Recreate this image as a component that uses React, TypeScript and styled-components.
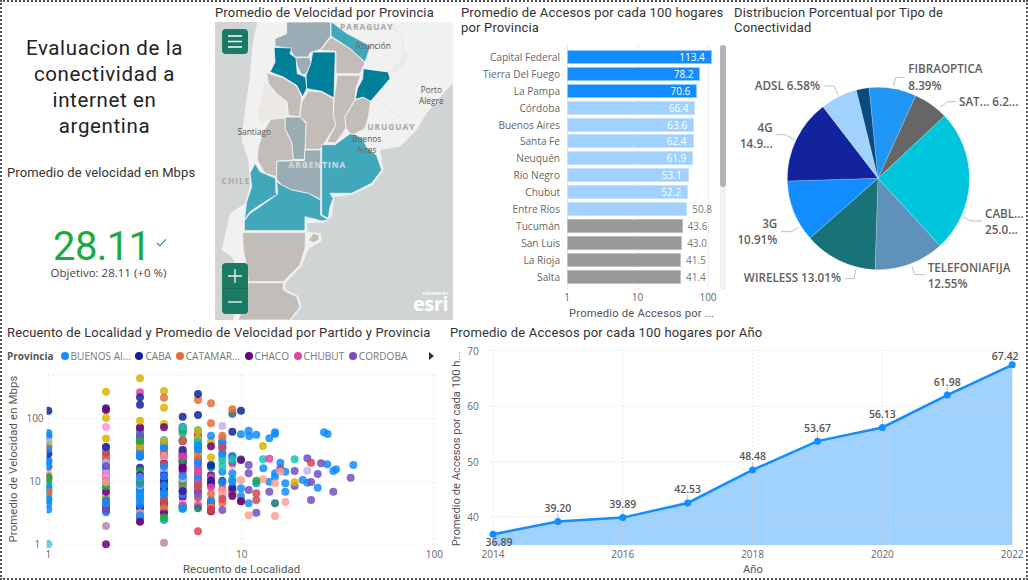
import React from 'react';
import styled, { createGlobalStyle } from 'styled-components';

const GlobalStyle = createGlobalStyle`
  html, body { margin: 0; padding: 0; background: #fff; }
  * { box-sizing: border-box; }
`;

const TITLE_FONT = `Roboto, "Liberation Sans", sans-serif`;
const DATA_FONT = `"Open Sans", "Liberation Sans", sans-serif`;

// Main page
const App = () => (
  <Page>
    <GlobalStyle />
    <TopRow>
      <KpiColumn />
      <MapPanel />
      <BarsPanel />
      <PiePanel />
    </TopRow>
    <BottomRow>
      <ScatterPanel />
      <LinePanel />
    </BottomRow>
  </Page>
);

export default App;

const Page = styled.div`
  width: 1028px;
  height: 580px;
  border: 2px dotted #555;
  display: flex;
  flex-direction: column;
  overflow: hidden;
  background: #fff;
`;

const TopRow = styled.div`
  height: 318px;
  display: flex;
  flex: none;
`;

const BottomRow = styled.div`
  flex: 1;
  display: flex;
  min-height: 0;
`;

const Title = styled.div`
  font-family: ${TITLE_FONT};
  font-size: 13px;
  line-height: 15px;
  letter-spacing: 0.17px;
  color: #333;
`;

// KPI column
const KpiColumn = () => (
  <KpiWrap>
    <Heading>Evaluacion de la conectividad a internet en argentina</Heading>
    <KpiLabel>Promedio de velocidad en Mbps</KpiLabel>
    <KpiValue>
      28.11
      <CheckMark viewBox="0 0 12 10">
        <path d="M1 5.5 L4.2 8.5 L11 1.5" fill="none" stroke="#1aab40" strokeWidth="1.4" />
      </CheckMark>
    </KpiValue>
    <KpiGoal>Objetivo: 28.11 (+0 %)</KpiGoal>
  </KpiWrap>
);

const KpiWrap = styled.div`
  width: 213px;
  flex: none;
  display: flex;
  flex-direction: column;
  padding-top: 34px;
`;

const Heading = styled.h1`
  margin: 0 0 0 17.5px;
  width: 170px;
  font-family: ${TITLE_FONT};
  font-weight: 400;
  font-size: 20.5px;
  line-height: 25.9px;
  letter-spacing: 0.62px;
  text-align: center;
  color: #222;
`;

const KpiLabel = styled.div`
  margin: 25px 0 0 5px;
  font-family: ${TITLE_FONT};
  font-size: 13px;
  line-height: 16px;
  letter-spacing: 0.1px;
  color: #333;
  white-space: nowrap;
`;

const KpiValue = styled.div`
  position: relative;
  align-self: flex-start;
  margin: 48px 0 0 51px;
  font-family: ${TITLE_FONT};
  font-size: 40px;
  line-height: 36px;
  letter-spacing: -0.6px;
  color: #1aab40;
`;

const CheckMark = styled.svg`
  position: absolute;
  left: 100%;
  top: 9px;
  margin-left: 6px;
  width: 11px;
  height: 9px;
`;

const KpiGoal = styled.div`
  margin-top: 0;
  font-family: ${DATA_FONT};
  font-size: 11.5px;
  line-height: 16px;
  text-align: center;
  color: #444;
`;

// Map panel
const SLATE = '#9aacb4';
const STONE = '#c2bdb9';
const TEAL = '#41a7bb';
const DEEP = '#007f9b';
const PALE = '#ece9e5';

const provinces: { fill: string; pts: string }[] = [
  { fill: SLATE, pts: '860,66 992,66 992,108 962,148 930,158 925,171 885,171 868,146 825,138 825,116 860,101' },
  { fill: SLATE, pts: '885,174 928,172 934,190 918,222 905,224 895,206' },
  { fill: TEAL, pts: '993,66 1000,70 1040,100 1112,138 1095,186 1050,146 993,108' },
  { fill: STONE, pts: '993,111 1050,146 1095,188 1080,221 1008,221 1008,154 962,151' },
  { fill: DEEP, pts: '822,142 875,144 870,161 888,174 892,221 905,226 918,232 920,266 908,291 890,256 850,231 810,216 825,186' },
  { fill: DEEP, pts: '938,156 1006,156 1002,294 965,274 920,266 918,226 932,191' },
  { fill: DEEP, pts: '1090,206 1165,216 1170,236 1140,271 1112,304 1088,292 1066,298 1072,266 1088,236' },
  { fill: PALE, pts: '1212,151 1225,161 1215,194 1170,231 1170,214 1195,186' },
  { fill: STONE, pts: '800,218 850,234 890,258 905,291 898,351 865,346 862,306 830,281 805,251' },
  { fill: PALE, pts: '790,238 805,254 830,282 860,306 862,346 845,358 810,358 785,371 770,334 785,298' },
  { fill: STONE, pts: '925,274 965,276 1000,296 1000,346 1008,374 975,426 960,448 915,448 918,366 900,351 905,306' },
  { fill: STONE, pts: '1012,226 1082,226 1068,264 1065,298 1035,351 1038,384 1008,428 980,428 1008,374 1000,346 1002,296' },
  { fill: STONE, pts: '1065,301 1090,292 1112,304 1105,351 1095,386 1055,406 1038,384 1035,351' },
  { fill: SLATE, pts: '855,351 900,351 918,371 915,448 913,478 880,478 875,426 855,386' },
  { fill: STONE, pts: '812,358 855,354 855,386 875,428 880,480 830,484 830,530 795,520 772,480 775,440 790,395' },
  { fill: SLATE, pts: '830,484 880,482 913,482 915,450 962,450 962,598 925,580 875,570 845,555 830,538' },
  { fill: TEAL, pts: '965,434 1005,434 1050,401 1085,411 1100,441 1130,466 1145,510 1115,550 1055,580 990,580 1000,595 990,620 985,655 965,645 965,600' },
  { fill: TEAL, pts: '765,490 780,515 827,535 828,578 832,583 780,615 750,635 733,660 740,605 755,560 750,520' },
  { fill: TEAL, pts: '830,545 845,555 875,570 925,580 962,600 962,645 985,660 965,663 915,650 915,692 733,692 733,662 750,640 780,620 833,582' },
  { fill: STONE, pts: '727,697 917,697 915,745 900,795 850,845 745,845 740,800 730,750' },
  { fill: STONE, pts: '925,720 940,700 957,705 957,720 940,728' },
  { fill: STONE, pts: '745,848 850,848 850,870 890,890 900,920 870,960 715,960 735,900' },
];

const mapLabels: { x: number; y: number; t: string; tone: 'city' | 'country' | 'inner' }[] = [
  { x: 1100, y: 90, t: 'PARAGUAY', tone: 'country' },
  { x: 1119, y: 148, t: 'Asunción', tone: 'city' },
  { x: 1294, y: 279, t: 'Porto', tone: 'city' },
  { x: 1294, y: 311, t: 'Alegre', tone: 'city' },
  { x: 1174, y: 390, t: 'URUGUAY', tone: 'country' },
  { x: 763, y: 404, t: 'Santiago', tone: 'city' },
  { x: 1100, y: 427, t: 'Buenos', tone: 'city' },
  { x: 1100, y: 458, t: 'Aires', tone: 'city' },
  { x: 952, y: 504, t: 'ARGENTINA', tone: 'inner' },
  { x: 708, y: 553, t: 'CHILE', tone: 'country' },
];

const labelColors = { city: '#505050', country: '#a6a6a6', inner: '#cdd6d9' };

const MapPanel = () => (
  <MapWrap>
    <MapTitle>Promedio de Velocidad por Provincia</MapTitle>
    <MapCanvas>
      <MapSvg viewBox="645 66 714 894">
        <rect x="645" y="66" width="714" height="894" fill="#f1f1f1" />
        <polygon
          points="645,66 772,66 758,130 748,240 735,330 725,420 745,480 750,560 735,610 690,640 680,685 665,750 695,770 715,810 700,960 645,960"
          fill="#d2d5d5"
        />
        <polygon
          points="1359,250 1330,280 1280,340 1250,390 1200,440 1140,450 1150,510 1118,555 1055,585 1003,590 995,650 970,668 920,670 922,695 962,700 965,722 925,748 905,798 856,848 856,868 895,888 905,920 875,960 1359,960"
          fill="#d0d4d5"
        />
        <polyline points="1120,290 1175,330 1235,385" fill="none" stroke="#dcdcdc" strokeWidth="2" />
        <polyline points="1170,80 1205,100 1210,152" fill="none" stroke="#dcdcdc" strokeWidth="2" />
        {provinces.map((p, i) => (
          <polygon key={i} points={p.pts} fill={p.fill} stroke="#f2f3f3" strokeWidth="2.5" strokeLinejoin="round" />
        ))}
        {mapLabels.map(l => (
          <MapLabel key={l.t} x={l.x} y={l.y} $tone={l.tone}>
            {l.t}
          </MapLabel>
        ))}
      </MapSvg>
      <MenuButton>
        <svg width="14" height="13" viewBox="0 0 14 13">
          <path d="M0 1 H14 M0 6.5 H14 M0 12 H14" stroke="#fff" strokeWidth="1.3" />
        </svg>
      </MenuButton>
      <ZoomGroup>
        <ZoomButton>
          <svg width="14" height="14" viewBox="0 0 14 14">
            <path d="M7 0 V14 M0 7 H14" stroke="#f4f0d8" strokeWidth="1.4" />
          </svg>
        </ZoomButton>
        <ZoomButton>
          <svg width="14" height="14" viewBox="0 0 14 14">
            <path d="M0 7 H14" stroke="#dfe8e4" strokeWidth="1.4" />
          </svg>
        </ZoomButton>
      </ZoomGroup>
      <EsriMark>
        <EsriSmall>POWERED BY</EsriSmall>
        <EsriWord>esri</EsriWord>
      </EsriMark>
    </MapCanvas>
  </MapWrap>
);

const MapWrap = styled.div`
  width: 239px;
  flex: none;
  display: flex;
  flex-direction: column;
  padding-top: 3px;
`;

const MapTitle = styled(Title)`
  height: 17px;
  white-space: nowrap;
`;

const MapCanvas = styled.div`
  position: relative;
  width: 238px;
  height: 298px;
  overflow: hidden;
`;

const MapSvg = styled.svg`
  display: block;
  width: 238px;
  height: 298px;
`;

const MapLabel = styled.text<{ $tone: 'city' | 'country' | 'inner' }>`
  font-family: ${DATA_FONT};
  font-size: 25px;
  font-weight: ${p => (p.$tone === 'city' ? 400 : 700)};
  letter-spacing: ${p => (p.$tone === 'city' ? '0' : '3px')};
  text-anchor: middle;
  fill: ${p => labelColors[p.$tone]};
  stroke: rgba(255, 255, 255, 0.3);
  stroke-width: 1.5px;
  paint-order: stroke;
`;

const MenuButton = styled.div`
  position: absolute;
  left: 7px;
  top: 7px;
  width: 26px;
  height: 25px;
  border-radius: 4px;
  background: #1a7a63;
  display: flex;
  align-items: center;
  justify-content: center;
`;

const ZoomGroup = styled.div`
  position: absolute;
  left: 7px;
  top: 241px;
  width: 26px;
  height: 51px;
  border-radius: 4px;
  background: #1a7a63;
  display: flex;
  flex-direction: column;
  overflow: hidden;
`;

const ZoomButton = styled.div`
  flex: 1;
  display: flex;
  align-items: center;
  justify-content: center;
  & + & {
    border-top: 1px solid #176a56;
  }
`;

const EsriMark = styled.div`
  position: absolute;
  right: 5px;
  bottom: 7px;
  display: flex;
  flex-direction: column;
  align-items: flex-end;
  color: #fff;
  font-family: ${DATA_FONT};
`;

const EsriSmall = styled.div`
  font-size: 4px;
  line-height: 5px;
  font-weight: 700;
`;

const EsriWord = styled.div`
  font-size: 20px;
  line-height: 15px;
  font-weight: 700;
  letter-spacing: -0.5px;
  padding-bottom: 2px;
`;

// Bar chart panel
const barData: { name: string; value: number; tone: 'blue' | 'light' | 'gray'; outside?: boolean }[] = [
  { name: 'Capital Federal', value: 113.4, tone: 'blue' },
  { name: 'Tierra Del Fuego', value: 78.2, tone: 'blue' },
  { name: 'La Pampa', value: 70.6, tone: 'blue' },
  { name: 'Córdoba', value: 66.4, tone: 'light' },
  { name: 'Buenos Aires', value: 63.6, tone: 'light' },
  { name: 'Santa Fe', value: 62.4, tone: 'light' },
  { name: 'Neuquén', value: 61.9, tone: 'light' },
  { name: 'Río Negro', value: 53.1, tone: 'light' },
  { name: 'Chubut', value: 52.2, tone: 'light' },
  { name: 'Entre Ríos', value: 50.8, tone: 'light', outside: true },
  { name: 'Tucumán', value: 43.6, tone: 'gray', outside: true },
  { name: 'San Luis', value: 43.0, tone: 'gray', outside: true },
  { name: 'La Rioja', value: 41.5, tone: 'gray', outside: true },
  { name: 'Salta', value: 41.4, tone: 'gray', outside: true },
];

const barTones = {
  blue: { fill: '#118dff', edge: '#8cc8ff' },
  light: { fill: '#a0d1ff', edge: '#c4e2ff' },
  gray: { fill: '#999999', edge: '#c0c0c0' },
};

const BarsPanel = () => (
  <BarsWrap>
    <BarsTitle>
      Promedio de Accesos por cada 100 hogares
      <br />
      por Provincia
    </BarsTitle>
    <BarsArea>
      <GridLine $left={106} />
      <GridLine $left={176.5} />
      <GridLine $left={247} />
      <ScrollTrack>
        <ScrollThumb />
      </ScrollTrack>
      {barData.map(b => (
        <BarRow key={b.name}>
          <BarLabel>{b.name}</BarLabel>
          <Bar $tone={b.tone} style={{ width: (Math.log10(b.value) / 2) * 141 }}>
            {!b.outside && <BarValue>{b.value.toFixed(1)}</BarValue>}
            {b.outside && <BarValueOut>{b.value.toFixed(1)}</BarValueOut>}
          </Bar>
        </BarRow>
      ))}
    </BarsArea>
    <BarAxis>
      <BarTick>1</BarTick>
      <BarTick>10</BarTick>
      <BarTick>100</BarTick>
    </BarAxis>
    <BarAxisTitle>Promedio de Accesos por ...</BarAxisTitle>
  </BarsWrap>
);

const BarsWrap = styled.div`
  width: 267px;
  flex: none;
  margin-left: 7px;
  padding-top: 3px;
`;

const BarsTitle = styled(Title)`
  white-space: nowrap;
`;

const BarsArea = styled.div`
  position: relative;
  margin-top: 13.5px;
  height: 236.6px;
`;

const GridLine = styled.div<{ $left: number }>`
  position: absolute;
  left: ${p => p.$left}px;
  top: -4px;
  bottom: -4px;
  border-left: 1px dotted #ddd;
`;

const ScrollTrack = styled.div`
  position: absolute;
  left: 259px;
  top: -4px;
  bottom: -5px;
  width: 6px;
  border-radius: 3px;
  background: #f1f1f1;
`;

const ScrollThumb = styled.div`
  width: 100%;
  height: 142px;
  border-radius: 3px;
  background: #b3b3b3;
`;

const BarRow = styled.div`
  position: relative;
  height: 16.9px;
  display: flex;
  align-items: center;
`;

const BarLabel = styled.div`
  width: 99px;
  flex: none;
  margin-right: 7px;
  font-family: ${DATA_FONT};
  font-size: 10.1px;
  text-align: right;
  color: #666;
  white-space: nowrap;
`;

const Bar = styled.div<{ $tone: 'blue' | 'light' | 'gray' }>`
  position: relative;
  height: 14px;
  background: ${p => barTones[p.$tone].fill};
  border: 1px solid ${p => barTones[p.$tone].edge};
`;

const BarValue = styled.span`
  position: absolute;
  right: 6px;
  top: 0;
  font-family: ${DATA_FONT};
  font-size: 10px;
  line-height: 12px;
  font-weight: 500;
  color: #fff;
`;

const BarValueOut = styled.span`
  position: absolute;
  left: 100%;
  margin-left: 6px;
  top: 0;
  font-family: ${DATA_FONT};
  font-size: 10px;
  line-height: 12px;
  color: #777;
`;

const BarAxis = styled.div`
  margin: 6px 0 0 91px;
  width: 171px;
  height: 13px;
  display: flex;
  justify-content: space-between;
  font-family: ${DATA_FONT};
  font-size: 10px;
  line-height: 13px;
  color: #666;
`;

const BarTick = styled.span`
  width: 30px;
  text-align: center;
`;

const BarAxisTitle = styled.div`
  margin: 3px 0 0 108px;
  font-family: ${TITLE_FONT};
  font-size: 11.2px;
  line-height: 14px;
  letter-spacing: 0.2px;
  color: #555;
  white-space: nowrap;
`;

// Pie panel
const slices: { a: [number, number]; b: [number, number]; fill: string }[] = [
  { a: [423, 263], b: [563, 287], fill: '#1f96f3' },
  { a: [563, 287], b: [650, 348], fill: '#666666' },
  { a: [650, 348], b: [636, 737], fill: '#00c6dd' },
  { a: [636, 737], b: [441, 809], fill: '#5f92ba' },
  { a: [441, 809], b: [246, 714], fill: '#197278' },
  { a: [246, 714], b: [178, 543], fill: '#118dff' },
  { a: [178, 543], b: [285, 320], fill: '#12239e' },
  { a: [285, 320], b: [385, 270], fill: '#a0d1ff' },
  { a: [385, 270], b: [423, 263], fill: '#0a4a80' },
];

const pieLabels: { x: number; y: number; t: string; end?: boolean }[] = [
  { x: 541, y: 220, t: 'FIBRAOPTICA' },
  { x: 541, y: 269, t: '8.39%' },
  { x: 693, y: 318, t: 'SAT... 6.2...' },
  { x: 771, y: 653, t: 'CABL...' },
  { x: 771, y: 702, t: '25.0...' },
  { x: 599, y: 815, t: 'TELEFONIAFIJA' },
  { x: 599, y: 863, t: '12.55%' },
  { x: 339, y: 847, t: 'WIRELESS 13.01%', end: true },
  { x: 148, y: 685, t: '3G', end: true },
  { x: 148, y: 733, t: '10.91%', end: true },
  { x: 134, y: 395, t: '4G', end: true },
  { x: 134, y: 444, t: '14.9...', end: true },
  { x: 276, y: 271, t: 'ADSL 6.58%', end: true },
];

const pieLeaders = [
  'M496 258 L503 232 H530',
  'M636 322 L660 305 H684',
  'M706 652 L730 663 H762',
  'M552 800 L560 824 H590',
  'M384 808 L378 836 H350',
  'M212 682 L190 695 H160',
  'M200 420 L172 404 H145',
  'M330 285 L318 258 H288',
];

const PiePanel = () => (
  <PieWrap>
    <Title>
      Distribucion Porcentual por Tipo de
      <br />
      Conectividad
    </Title>
    <PieSvg viewBox="18 105 876 855">
      {slices.map((s, i) => (
        <path
          key={i}
          d={`M450 535 L${s.a[0]} ${s.a[1]} A274 274 0 0 1 ${s.b[0]} ${s.b[1]} Z`}
          fill={s.fill}
          stroke="#fff"
          strokeWidth="0.6"
        />
      ))}
      {pieLeaders.map(d => (
        <path key={d} d={d} fill="none" stroke="#bdbdbd" strokeWidth="3" />
      ))}
      {pieLabels.map(l => (
        <PieLabel key={l.t} x={l.x} y={l.y} $end={l.end}>
          {l.t}
        </PieLabel>
      ))}
    </PieSvg>
  </PieWrap>
);

const PieWrap = styled.div`
  flex: 1;
  margin-left: 6px;
  padding-top: 3px;
  min-width: 0;
`;

const PieSvg = styled.svg`
  display: block;
  width: 292px;
  height: 285px;
`;

const PieLabel = styled.text<{ $end?: boolean }>`
  font-family: ${DATA_FONT};
  font-size: 35px;
  font-weight: 600;
  fill: #605e5c;
  text-anchor: ${p => (p.$end ? 'end' : 'start')};
`;

// Scatter panel
const pal = {
  blue: '#118dff',
  navy: '#12239e',
  orange: '#e66c37',
  violet: '#6b007b',
  pink: '#e044a7',
  purple: '#744ec2',
  yellow: '#d9b300',
  red: '#d64550',
  teal: '#197278',
  green: '#1aab40',
  mint: '#15c6ad',
  sky: '#4ac6e0',
  lav: '#b887ad',
  lilac: '#bfb2f5',
  salmon: '#ff9f8f',
  rose: '#ff8fdc',
};

const legendItems = [
  { name: 'BUENOS AI...', color: pal.blue },
  { name: 'CABA', color: pal.navy },
  { name: 'CATAMAR...', color: pal.orange },
  { name: 'CHACO', color: pal.violet },
  { name: 'CHUBUT', color: pal.pink },
  { name: 'CORDOBA', color: pal.purple },
];

const columns: [number, number, number, number][] = [
  [145, 330, 570, 34],
  [318, 355, 590, 48],
  [420, 320, 605, 70],
  [492, 360, 600, 66],
  [548, 320, 585, 64],
  [594, 330, 570, 56],
  [633, 345, 585, 26],
  [667, 345, 570, 20],
  [697, 405, 545, 10],
];

const columnColors = [
  pal.blue, pal.blue, pal.violet, pal.orange, pal.purple, pal.blue, pal.pink, pal.yellow,
  pal.green, pal.blue, pal.red, pal.lilac, pal.mint, pal.blue, pal.navy, pal.salmon, pal.rose,
];

// fixed sequence so that the cloud is the same on every run
const makeColumnDots = () => {
  const dots: { x: number; y: number; c: string }[] = [];
  let seed = 7;
  const next = () => {
    seed = (seed * 1103515245 + 12345) % 2147483648;
    return seed / 2147483648;
  };
  columns.forEach(([x, top, bottom, count]) => {
    for (let i = 0; i < count; i++) {
      dots.push({
        x,
        y: top + next() * (bottom - top),
        c: columnColors[Math.floor(next() * columnColors.length)],
      });
    }
  });
  return dots;
};

const groupDots = (c: string, list: number[]) => {
  const out: { x: number; y: number; c: string }[] = [];
  for (let i = 0; i < list.length; i += 2) out.push({ x: list[i], y: list[i + 1], c });
  return out;
};

const sparseDots = [
  ...groupDots(pal.blue, [746, 332, 748, 348, 769, 344, 723, 343, 808, 355, 825, 337, 825, 342, 972, 337, 983, 342, 1060, 435, 1008, 448, 1000, 453, 982, 433, 908, 480, 922, 488, 953, 503, 856, 515, 856, 455, 825, 460, 825, 470, 808, 485, 790, 445, 746, 550, 723, 505, 723, 528, 697, 460, 697, 485, 697, 410, 769, 490, 841, 428, 856, 490, 633, 347, 667, 368]),
  ...groupDots(pal.purple, [1052, 473, 1000, 515, 953, 462, 963, 430, 922, 415, 884, 453, 884, 498, 808, 515, 933, 540, 933, 486, 746, 460, 746, 435, 746, 510, 769, 578, 667, 570, 841, 445]),
  ...groupDots(pal.mint, [884, 418, 789, 418, 723, 418, 697, 418, 667, 422]),
  ...groupDots(pal.salmon, [723, 480, 825, 490, 856, 546, 746, 586, 825, 588, 789, 478, 841, 455, 667, 512]),
  ...groupDots(pal.red, [933, 428, 769, 520, 769, 540, 723, 544, 594, 634, 667, 382, 667, 537]),
  ...groupDots(pal.yellow, [789, 378, 884, 487, 492, 213, 492, 263, 420, 175, 318, 215, 318, 294, 420, 302, 492, 312, 633, 412]),
  ...groupDots(pal.pink, [808, 416, 420, 217]),
  ...groupDots(pal.teal, [825, 550, 697, 281, 594, 565]),
  ...groupDots(pal.green, [769, 482]),
  ...groupDots(pal.orange, [697, 268, 633, 250, 594, 240, 492, 233, 633, 310, 667, 347]),
  ...groupDots(pal.navy, [723, 272, 594, 222, 420, 232, 318, 265, 145, 272, 548, 290, 594, 285, 697, 335, 420, 254]),
  ...groupDots(pal.violet, [318, 270, 492, 322, 723, 420, 318, 673, 420, 605, 697, 528, 723, 544]),
  ...groupDots(pal.rose, [318, 321]),
  ...groupDots(pal.lilac, [667, 318, 922, 452]),
  ...groupDots(pal.lav, [318, 618, 492, 668]),
  ...groupDots(pal.sky, [145, 672]),
];

const scatterDots = [...makeColumnDots(), ...sparseDots];

const ScatterPanel = () => (
  <ScatterWrap>
    <ScatterTitle>Recuento de Localidad y Promedio de Velocidad por Partido y Provincia</ScatterTitle>
    <Legend>
      <LegendHead>Provincia</LegendHead>
      {legendItems.map(item => (
        <LegendItem key={item.name}>
          <LegendDot $color={item.color} />
          {item.name}
        </LegendItem>
      ))}
      <LegendArrow />
    </Legend>
    <ScatterSvg viewBox="6 135 1329 639">
      <defs>
        <clipPath id="plot-clip">
          <rect x="140" y="158" width="1170" height="530" />
        </clipPath>
      </defs>
      <GridPath d="M145 165 H1303 M145 296 H1303 M145 485 H1303 M145 673 H1303 M145 165 V673 M725 165 V673 M1303 165 V673" />
      <g clipPath="url(#plot-clip)">
        {scatterDots.map((d, i) => (
          <circle key={i} cx={d.x} cy={d.y} r="12" fill={d.c} opacity="0.85" />
        ))}
      </g>
      <TickText x="105" y="307">100</TickText>
      <TickText x="105" y="496">10</TickText>
      <TickText x="112" y="684">1</TickText>
      <TickText x="145" y="714">1</TickText>
      <TickText x="725" y="714">10</TickText>
      <TickText x="1303" y="714">100</TickText>
      <AxisText x="725" y="758">Recuento de Localidad</AxisText>
      <AxisText transform="translate(50 417) rotate(-90)">Promedio de Velocidad en Mbps</AxisText>
    </ScatterSvg>
  </ScatterWrap>
);

const ScatterWrap = styled.div`
  width: 443px;
  flex: none;
  padding-top: 5px;
`;

const ScatterTitle = styled(Title)`
  margin-left: 5px;
  line-height: 16px;
  white-space: nowrap;
`;

const Legend = styled.div`
  margin: 5px 0 0 5px;
  height: 19px;
  display: flex;
  align-items: center;
  position: relative;
  font-family: ${DATA_FONT};
  font-size: 10.1px;
  color: #777;
  white-space: nowrap;
`;

const LegendHead = styled.span`
  font-weight: 700;
  font-size: 10px;
  color: #555;
  margin-right: 7px;
`;

const LegendItem = styled.span`
  display: flex;
  align-items: center;
  margin-right: 4.6px;
`;

const LegendDot = styled.span<{ $color: string }>`
  width: 8px;
  height: 8px;
  border-radius: 50%;
  margin-right: 2px;
  background: ${p => p.$color};
`;

const LegendArrow = styled.span`
  position: absolute;
  left: 422px;
  top: 6px;
  border-left: 5px solid #333;
  border-top: 4px solid transparent;
  border-bottom: 4px solid transparent;
`;

const ScatterSvg = styled.svg`
  display: block;
  width: 443px;
  height: 213px;
`;

const GridPath = styled.path`
  fill: none;
  stroke: #d8d8d8;
  stroke-width: 2.5px;
  stroke-dasharray: 3 9;
`;

const TickText = styled.text`
  font-family: ${DATA_FONT};
  font-size: 30px;
  fill: #666;
  text-anchor: middle;
`;

const AxisText = styled.text`
  font-family: ${TITLE_FONT};
  font-size: 34px;
  letter-spacing: 0.4px;
  fill: #555;
  text-anchor: middle;
`;

// Line chart panel
const yearData = [
  { year: 2014, value: 36.89 },
  { year: 2015, value: 39.2 },
  { year: 2016, value: 39.89 },
  { year: 2017, value: 42.53 },
  { year: 2018, value: 48.48 },
  { year: 2019, value: 53.67 },
  { year: 2020, value: 56.13 },
  { year: 2021, value: 61.98 },
  { year: 2022, value: 67.42 },
];

const xOf = (year: number) => 493 + (year - 2014) * 64.9;
const yOf = (value: number) => 517 - (value - 40) * 5.55;
const linePoints = yearData.map(d => `${xOf(d.year)},${yOf(d.value)}`).join(' ');

// label place next to each point; the first sits below, the last is pushed in by the edge
const labelPlace = (i: number, x: number, y: number) => {
  if (i === 0) return { x: x + 6, y: y + 12 };
  if (i === yearData.length - 1) return { x: x - 7, y: y - 5 };
  return { x, y: y - 9.5 };
};

const LinePanel = () => (
  <LineWrap>
    <LineTitle>Promedio de Accesos por cada 100 hogares por Año</LineTitle>
    <LineSvg viewBox="445 343 581 235">
      <polygon points={`${xOf(2014)},545 ${linePoints} ${xOf(2022)},545`} fill="#a0d1ff" />
      {[70, 60, 50, 40].map(v => (
        <LineGrid key={v} x1="490" x2="1012" y1={yOf(v)} y2={yOf(v)} />
      ))}
      {[2014, 2016, 2018, 2020, 2022].map(y => (
        <LineGrid key={y} x1={xOf(y)} x2={xOf(y)} y1="350" y2="545" />
      ))}
      {yearData.slice(1).map(d => (
        <line
          key={d.year}
          x1={xOf(d.year)}
          x2={xOf(d.year)}
          y1={yOf(d.value) - 8}
          y2={yOf(d.value)}
          stroke="#c8c8c8"
          strokeWidth="1"
        />
      ))}
      <polyline points={linePoints} fill="none" stroke="#118dff" strokeWidth="2.5" />
      {yearData.map(d => (
        <circle key={d.year} cx={xOf(d.year)} cy={yOf(d.value)} r="3.5" fill="#118dff" />
      ))}
      {yearData.map((d, i) => {
        const place = labelPlace(i, xOf(d.year), yOf(d.value));
        return (
          <PointLabel key={d.year} x={place.x} y={place.y}>
            {d.value.toFixed(2)}
          </PointLabel>
        );
      })}
      {[70, 60, 50, 40].map(v => (
        <LineTick key={v} x="473" y={yOf(v) + 4}>{v}</LineTick>
      ))}
      {[2014, 2016, 2018, 2020, 2022].map(y => (
        <LineTick key={y} x={xOf(y)} y="558">{y}</LineTick>
      ))}
      <LineAxis x="753" y="573">Año</LineAxis>
      <LineAxis transform="translate(460 449) rotate(-90)">Promedio de Accesos por cada 100 h...</LineAxis>
    </LineSvg>
  </LineWrap>
);

const LineWrap = styled.div`
  flex: 1;
  padding-top: 5px;
  min-width: 0;
`;

const LineTitle = styled(Title)`
  margin-left: 5px;
  line-height: 16px;
  white-space: nowrap;
`;

const LineSvg = styled.svg`
  display: block;
  margin-top: 2px;
  width: 581px;
  height: 235px;
`;

const LineGrid = styled.line`
  stroke: #d4d4d4;
  stroke-width: 1px;
  stroke-dasharray: 1 3;
`;

const PointLabel = styled.text`
  font-family: ${DATA_FONT};
  font-size: 10.5px;
  font-weight: 600;
  fill: #555;
  text-anchor: middle;
`;

const LineTick = styled.text`
  font-family: ${DATA_FONT};
  font-size: 10px;
  fill: #666;
  text-anchor: middle;
`;

const LineAxis = styled.text`
  font-family: ${TITLE_FONT};
  font-size: 11.2px;
  fill: #555;
  text-anchor: middle;
`;
